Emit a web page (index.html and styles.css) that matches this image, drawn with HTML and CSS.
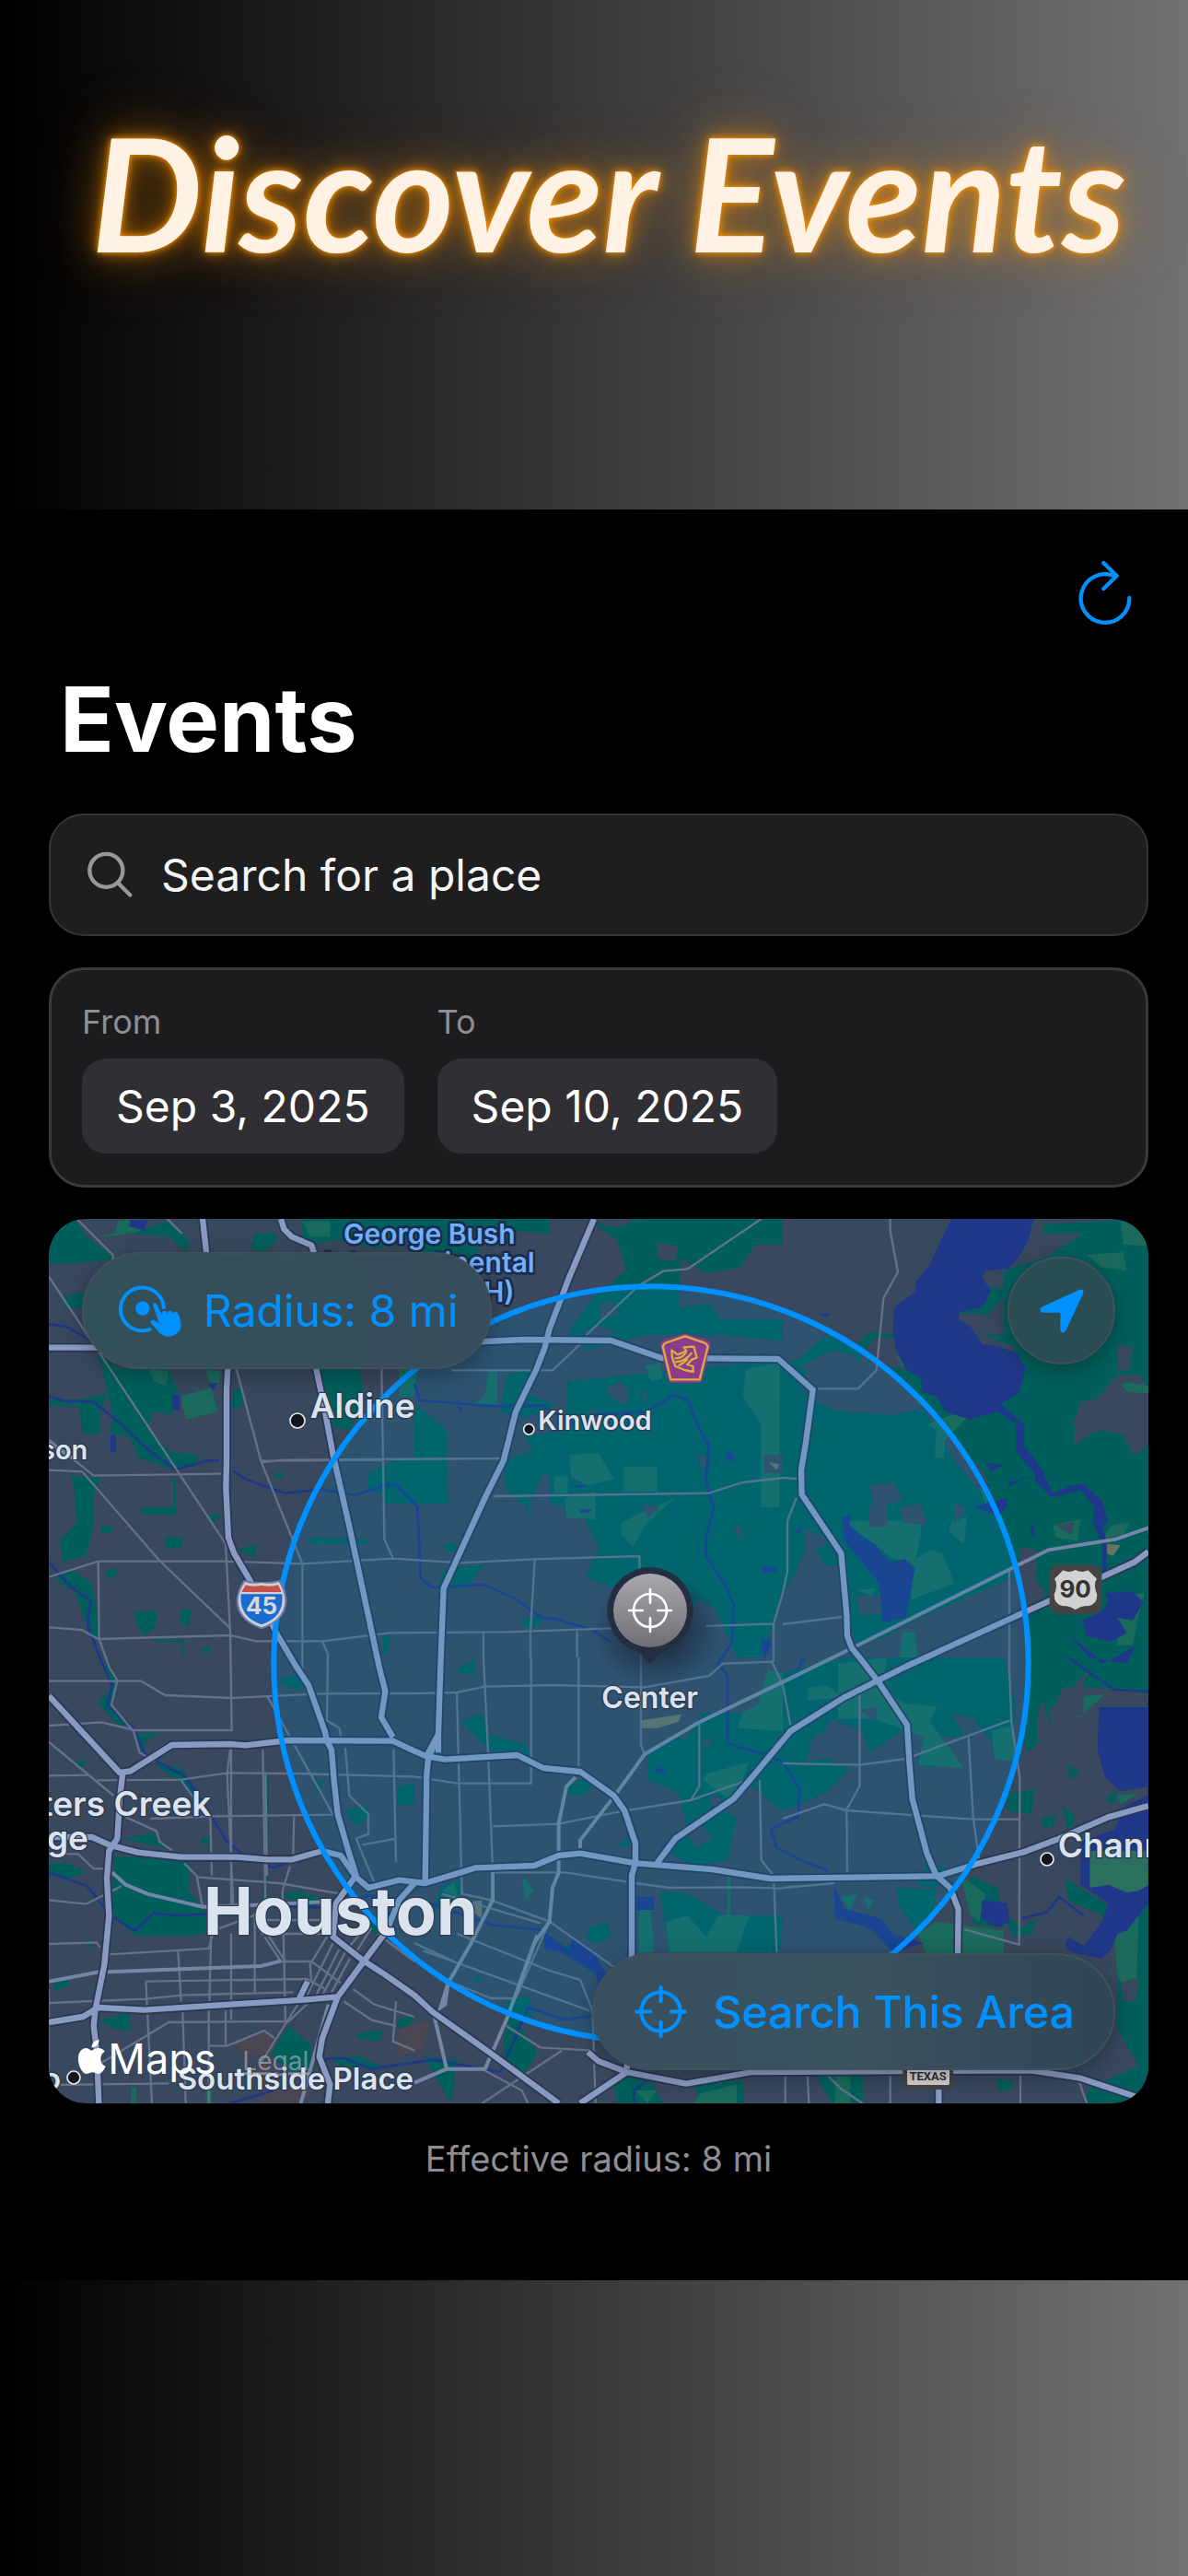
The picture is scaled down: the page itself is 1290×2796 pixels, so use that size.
FILE: index.html
```html
<!DOCTYPE html>
<html lang="en">

<head>
    <meta charset="UTF-8">
    <meta name="viewport" content="width=device-width, initial-scale=1.0">
    <title>Discover Events</title>
    <link rel="stylesheet" href="styles.css">
</head>

<body>

    <header class="hero">
        <h1 class="heroTitle">Discover Events</h1>
    </header>

    <main class="panel">
        <div class="toolbar">
            <button type="button" class="iconButton" aria-label="Refresh">
                <svg class="refreshIcon" viewBox="60 45 180 225">
                    <path d="M229 177A79 79 0 1 1 182 106M145 63L188 105L145 147" />
                </svg>
            </button>
        </div>

        <h2 class="title">Events</h2>

        <div class="cards">
            <label class="search">
                <svg class="searchIcon" viewBox="134 134 150 152">
                    <circle cx="195" cy="196" r="54" />
                    <path d="M234 237L273 276" />
                </svg>
                <input class="searchInput" type="text" placeholder="Search for a place" aria-label="Search for a place">
            </label>

            <div class="dates">
                <div class="field">
                    <label for="from">From</label>
                    <button type="button" id="from" class="dateButton">Sep 3, 2025</button>
                </div>
                <div class="field">
                    <label for="to">To</label>
                    <button type="button" id="to" class="dateButton">Sep 10, 2025</button>
                </div>
            </div>

            <div class="map">
                <svg class="mapArt" viewBox="9 12 3582 2880" preserveAspectRatio="xMidYMid slice">
                    <rect class="land" x="9" y="12" width="3582" height="2880" />

                    <!-- woods and parks -->
                    <g class="green">
                        <path d="M9 20L100 20L130 70L215 130L210 145L110 155L9 160ZM280 60L390 20L420 30L470 90L455 118L400 70ZM680 60L750 58L752 85L705 120L668 105ZM60 265L120 250L130 305L60 300Z" />
                        <path d="M170 450L240 500L400 505L430 570L410 650L350 640L330 690L400 770L495 780L490 815L420 830L375 815L300 790L270 720L205 710L220 660Z" />
                        <path d="M10 600L110 600L200 580L175 640V712H120L108 640L115 622H10ZM610 570L640 560V620L605 635ZM745 840H772V855H745ZM180 1012H212V1034H180ZM388 1048H443V1084H388ZM625 1090L683 1070V1115ZM195 1155L235 1150L225 1180H195ZM500 1420L535 1400V1425Z" />
                        <path d="M80 850L180 855L155 905V1015L130 1110L55 1130L45 1060L100 1000L92 890ZM312 950H415V855H423V975H312ZM480 960L520 930ZM520 980L572 970L545 1000ZM288 1290L362 1288L355 1340L320 1370L295 1330ZM440 1285L473 1282L465 1340L436 1325ZM350 1380L450 1383V1435H442V1390H350Z" />
                        <path d="M30 1180L80 1150L150 1200L165 1290L185 1390L150 1370L120 1300L90 1220L60 1210ZM190 1440L225 1500L230 1560L210 1590L260 1660L240 1665L170 1590L210 1540ZM295 1690L370 1682L320 1715L330 1760ZM350 1785L440 1800L495 1880L540 1960L500 1905L430 1840ZM90 1776L135 1775L115 1800Z" />
                        <path d="M220 2087L440 2098L465 2110V2200L520 2270L515 2340L405 2345L290 2345L215 2285ZM400 2300L520 2280V2330L480 2345L400 2345ZM9 2110L70 2110L130 2140L80 2160L9 2150ZM250 2030L350 2010L390 2060L320 2045ZM120 2345L160 2395L140 2380ZM20 2500L70 2490V2510L30 2525Z" />
                        <path d="M735 2720L790 2640L860 2700L870 2780L800 2790L735 2740ZM170 2620L273 2600V2892H275V2655L225 2650ZM720 1820H726V2170H720ZM1010 2665L1100 2650L1085 2690L1015 2680ZM1145 2620L1200 2600L1185 2640L1150 2650ZM505 2025H540V2047H505ZM760 2210L830 2200L905 2230L860 2260ZM700 2220L730 2215L750 2265Z" />
                        <path d="M835 12H1110L1290 12L1640 12L1640 60L1430 45L1400 140L1230 130L1200 60L1080 110L940 80L835 100ZM900 500H1020L1040 600L990 700L930 690L890 610ZM1050 840L1130 800L1200 790V940H1107L1090 900H1050ZM1200 612L1305 700L1310 940H1200ZM845 1050L1050 1055L1040 1070L870 1070ZM1095 1370H1120L1110 1430H1095Z" />
                        <path d="M1780 25L1860 40L1930 12H2350L2400 12V95L2310 95L2260 170L2150 190L2070 140L2060 300L2160 290L2200 340H2400V410L2200 390L1950 390L1760 440L1700 380L1790 260L1890 180L1860 80Z" />
                        <path d="M1700 540L2400 470L2490 600L2600 640L2760 650L2860 630L2960 800L3100 960L3150 1180L2850 1310L2640 1400L2600 1240L2490 1060L2400 1240L2330 1440L2250 1440L2180 1280L2120 1250L2060 1390L1940 1250L1760 1180L1800 1080L1740 960L1640 940L1640 860L1560 720L1690 700Z" />
                        <path d="M1490 800L1600 760L1640 800L1560 970H1590L1500 900ZM1290 1155L1430 1135L1370 1210L1280 1225ZM1500 520L1580 500L1570 580L1660 620L1560 660L1480 640ZM1290 1070L1335 1065L1340 1095H1310ZM1545 1320L1620 1300L1600 1340L1560 1345Z" />
                        <path d="M2870 340L3000 200L3100 240L3160 215L3070 325L2860 310ZM3250 30L3591 12V560L3560 520L3491 520L3400 620L3350 700L3350 750L3420 700L3500 700L3540 780L3591 750V1080L3460 1140L3260 1230L3130 1080L3060 850L2960 720L2860 620L2750 490L3100 590L3160 430L3050 390H3120V180L3250 140L3380 60H3250Z" />
                        <path d="M3190 1300L3260 1230L3460 1140L3591 1080V1450H3195ZM2860 1060L3120 1060L3160 1150L2920 1260Z" />
                        <path d="M2880 280L2960 380L3050 390L2700 400L2580 560L2600 450L2500 500L2420 570L2400 480L2450 470L2540 390L2640 420L2680 380L2800 390Z" />
                        <path d="M2460 770L2560 700L2700 760L2800 940L2840 1000L2840 1080L2790 1090L2780 1140L2860 1160L2920 1260L2860 1300L2720 1380L2620 1360L2600 1220L2490 1060Z" />
                        <path d="M3200 1440H3591V1560L3470 1540L3310 1540L3250 1700L3200 1750L3180 1700L3190 1480ZM2610 1440L3120 1440L3160 1600L3140 1740L3100 1740L3020 1640L2950 1620L2990 1700H2900V1800L2840 1790L2860 1700L2790 1680L2680 1750L2660 1680L2560 1640L2470 1780L2540 1770L2620 1800L2540 1880L2400 1940L2300 1860L2210 1910L2080 1810L2180 1700L2060 1740L2140 1620L2320 1620L2360 1500Z" />
                        <path d="M1960 1745L2060 1700L2140 1720L2180 1860L2160 1920L2250 1960L2220 2100L2100 2120L2010 2060L2090 2000L2060 1880L1960 1840ZM2000 2200L2090 2210L2210 2280L2400 2280L2390 2400L2030 2400ZM2870 2110L2960 2130L2900 2190L2840 2180ZM2770 2190L2900 2195L2890 2290L2840 2340L2780 2250ZM3010 2150L3100 2190L3120 2320L3020 2310ZM3120 2280L3180 2320L3230 2290L3210 2340L3150 2350Z" />
                        <path d="M3130 1880L3220 1870L3210 1950L3130 1940ZM3245 1960L3290 1955L3280 1990L3250 1995ZM3330 1790L3370 1815L3335 1840ZM3310 1920L3355 1960L3330 2010ZM3450 1900L3490 1870L3480 1920ZM3320 2160L3480 2260L3591 2200V2892H3380L3400 2840L3560 2770L3490 2650V2400L3550 2300L3440 2280L3330 2230Z" />
                        <path d="M1350 1470L1395 1450V1500L1340 1490ZM1350 1650L1420 1620L1440 1690L1560 1720L1580 1760L1450 1745ZM1700 1860L1760 1830L1790 1840L1750 1890L1700 1890ZM1860 2050L1910 2020L1900 2060ZM1770 2320L1830 2300L1840 2350L1800 2370L1760 2360ZM1640 2350L1790 2430L1820 2500L1760 2450L1660 2390ZM970 1940L1050 1920L1050 1960L1010 1990ZM870 1840L905 1845L885 1885ZM1145 1860L1200 1850V1920H1145ZM760 1510L840 1490L830 1550L770 1530Z" />
                        <path d="M1500 2560L1570 2540L1590 2600L1540 2630L1600 2730L1560 2790L1490 2760ZM1850 2810L1950 2790L2010 2892H1860ZM1390 2480L1425 2480L1400 2505ZM2110 2820H2270V2892H2130ZM2500 2790L2660 2780V2892H2560ZM3100 2810L3150 2820L3140 2850H3100ZM1230 2740L1340 2750L1320 2892ZM920 2740L1020 2740L1120 2780L960 2770ZM1290 2180L1350 2170L1340 2250L1260 2260ZM1030 2310L1100 2300L1090 2350Z" />
                    </g>
                    <g class="lightGreen">
                        <path d="M235 20L270 15L310 50L220 68H170L225 58ZM835 20H925V70H860ZM335 500L400 508L390 555L350 540ZM440 590L560 555L570 510L520 500L560 640L455 665ZM520 2840H540V2892H520ZM277 2840H295V2892H277ZM1150 500H1210L1200 590H1150Z" />
                        <path d="M1440 510H1470V615H1390L1430 590ZM1705 780L1800 775L1850 860L1760 880L1710 850ZM1655 850H1700V905H1655ZM1690 920L1790 900V990L1695 985ZM1880 820H1990V900H1880ZM1875 1000L1980 950L2050 920L1960 1000L1910 1080L1875 1040ZM2280 500L2390 480V950H2330V680L2270 590ZM2030 430L2060 420L2050 500ZM1950 490L2000 480L2010 530L1970 540Z" />
                        <path d="M3500 20H3591V100L3510 95ZM3390 130L3510 120L3520 180L3440 170ZM3501 550L3530 545L3591 555V580L3520 575ZM2770 455L2800 470L2790 500ZM2870 680L2980 640L3010 650L2930 730L2925 790H2895L2900 700ZM2600 995H2850V1040L2830 1130L2760 1120ZM2800 1140L2880 1090L2920 1100L2960 1200L2820 1250ZM2950 1000L3000 980L2990 1070L2940 1030ZM3040 890L3080 920L3060 940ZM3280 1010L3370 990L3360 1060L3290 1050ZM3470 1010L3530 1000L3510 1040L3440 1055ZM2640 1220L2700 1215L2690 1240ZM2790 1355L2830 1360L2840 1440H2780Z" />
                        <path d="M2580 1460L2740 1440L2720 1540L2800 1590L2900 1600L2880 1650L2990 1800L2840 1790L2860 1700L2780 1670L2700 1640L2580 1640ZM3080 1680L3150 1660L3170 1780L3090 1770ZM2480 1540L2540 1530L2600 1570L2480 1580ZM2350 1480L2400 1490V1680L2250 1670L2270 1620L2320 1590ZM2150 1820L2290 1780L2270 1840L2220 1900L2140 1840ZM1930 2260H1970L1980 2400H1930ZM2020 2300L2090 2280L2150 2350L2190 2280H2290L2250 2400H2030ZM2220 2140H2230V2290H2220Z" />
                        <path d="M2840 2340L2900 2300L3120 2330V2410H2870ZM2980 2150L3060 2210L3040 2300L3010 2280ZM3325 1570L3450 1560L3360 1640ZM2590 2220L2640 2210L2620 2270ZM2660 2220L2700 2230L2680 2260ZM3490 1890L3560 1880L3500 1920ZM3480 2340L3560 2280L3550 2560L3490 2480ZM2130 2860L2250 2830V2892H2110ZM2570 2800H2620V2892H2570ZM1550 2150L1590 2200L1560 2230ZM1290 2200L1330 2170L1340 2220ZM1920 2850L1990 2850L1960 2892ZM3490 1240L3580 1230L3560 1300L3540 1400L3490 1400Z" />
                    </g>
                    <g class="land">
                        <path d="M1800 290L1840 280L1870 320L1810 340ZM1990 90L2060 100L2050 150L1990 140ZM1740 380L1800 360L1860 380L1800 400ZM1820 570L1870 540L1900 570L1890 620L1850 600ZM1940 580L1960 570L1950 620ZM1760 640L1800 630L1790 660ZM2120 780L2160 790L2140 840ZM1940 940L2000 950L1960 990ZM2460 490L2560 440L2640 460L2620 550H2500ZM2520 590L2750 580L2700 635H2560ZM2680 880L2760 870L2790 930L2700 950ZM2680 945H2740V1015H2680ZM2780 950L2850 940L2870 1010L2790 1000ZM2960 940L3000 950L2960 1010ZM2340 780H2400V840H2340Z" />
                        <path d="M3170 1080L3230 1090L3220 1220L3180 1210ZM3290 1010L3350 1000L3340 1040ZM3400 1480L3250 1630H3380V1520ZM3230 1620L3250 1580L3280 1710H3230ZM3370 610L3450 590L3530 600L3591 590V740L3560 780L3540 720L3440 700L3370 720L3345 680ZM3490 420L3540 430L3530 500L3490 510ZM2080 2010L2140 1990L2170 2030L2120 2060ZM2510 1690L2590 1680L2540 1740H2480ZM2650 1610L2710 1600L2700 1650ZM3500 2500L3560 2480L3550 2560H3510ZM2240 1020L2270 1010L2260 1060ZM2640 1240H2720V1300H2650ZM2470 1140H2590V1210H2470ZM2470 1020L2540 1050V1080H2470Z" />
                    </g>
                    <g class="rose">
                        <path d="M600 2700L710 2655L760 2680L740 2720L680 2740ZM690 2740L740 2760L730 2850L690 2800ZM720 2850L880 2840L830 2892H700ZM1150 2650L1250 2620L1230 2720L1140 2740Z" />
                    </g>
                    <g class="sand">
                        <path d="M1940 1645L2070 1625L2060 1650L1990 1670L1940 1670ZM1350 2240L1420 2230L1420 2290ZM3455 1070L3500 1075L3475 1110L3455 1100ZM2355 805L2390 810L2380 830Z" />
                    </g>

                    <!-- lakes and bayous -->
                    <g class="water">
                        <path d="M2950 12H3217L3200 80L3170 135L3135 175L3060 180L3050 205L3078 245L3050 300L2975 315L2972 340L3010 360L3050 420L3110 430L3165 450L3190 500L3170 580L3110 615L3150 650L3185 680V750L3240 820L3280 905L3340 880L3380 875L3440 930L3460 1000L3440 1010L3455 1060V1180H3440V1070L3410 1000L3415 950L3370 895L3280 920L3225 870L3220 840L3160 770V680L3100 640L3010 665L2930 640L2900 590L2855 575L2850 530L2800 500L2770 440L2758 370L2765 300L2830 250L2835 215L2880 160L2920 70Z" />
                        <path d="M2593 985L2625 975L2615 1010L2660 1050L2700 1070L2730 1110L2755 1130L2800 1120L2830 1150L2820 1210L2800 1310L2725 1325L2715 1200L2650 1120L2600 1060ZM3058 805L3118 815L3080 835ZM3135 870L3195 855L3135 885ZM3025 950L3130 920V950L3100 980L3060 965ZM3208 1012H3218V1040H3208ZM2438 1030L2460 1012V1040ZM2512 320L2558 320L2540 332Z" />
                        <path d="M3450 1230L3540 1225L3575 1260L3540 1320L3490 1310L3520 1360L3470 1390L3390 1370L3375 1320L3440 1290L3460 1260ZM3335 1370L3400 1420L3440 1460L3520 1420L3550 1400L3520 1460L3400 1440ZM3430 1602H3591V1860L3500 1876L3450 1830L3425 1740ZM3520 1920L3591 1890V2240L3520 2330L3490 2340L3470 2390L3440 2420L3340 2400L3320 2380L3330 2350L3380 2380L3440 2300L3460 2240L3370 2180L3370 2040L3480 2000Z" />
                        <path d="M3050 2230L3130 2240L3140 2300L3100 2320L3045 2290ZM2568 2180L2600 2260L2720 2290L2760 2340L2860 2370L2760 2400L2680 2320L2570 2290ZM1620 2330L1700 2390L1720 2350L1790 2410L1840 2500L1850 2600L1815 2570L1790 2470L1680 2400L1625 2390ZM1922 2220H1980V2262H1922ZM1980 1815L2003 1795L2020 1818ZM2460 1440H2475L2440 1500ZM2330 1380H2360V1400L2340 1450ZM2330 1140L2380 1150V1162H2335ZM2215 770L2240 780V800L2215 795Z" />
                        <path d="M275 15H330L320 50L270 35ZM411 585H436V635H411ZM210 715H228V770H210ZM525 550L560 545L545 570ZM1335 620L1355 625L1358 650ZM1720 880L1762 878L1755 888L1725 885ZM1740 960L1780 955L1770 968H1740Z" />
                    </g>
                    <g class="park">
                        <path d="M3400 2070L3590 2070L3591 2180L3560 2200L3520 2205L3460 2180L3400 2190Z" />
                    </g>
                    <g class="bayou">
                        <path d="M9 355L65 362L150 410M9 590L65 606H152L245 680L340 770L420 828L530 798L565 800M610 832L650 860L780 905L900 893L1005 912L1110 878L1140 880L1210 950L1220 1180L1255 1212L1430 1203L1530 1250L1615 1310L1660 1315L1780 1350L1840 1390M9 1130L80 1210L145 1255L135 1335L185 1465L215 1530L200 1595L285 1670L325 1760L450 1825L490 1880L590 2040L640 2080L740 2125L800 2105" />
                        <path d="M1200 550L1218 603L1460 622L1615 620L1720 680L1790 650L1955 640L2045 585L2090 600L2130 700L2160 750L2148 865L2175 950L2150 1050V1110L2210 1200L2240 1270L2235 1390L2190 1460L2220 1500V1720L2320 1750L2400 1780L2455 1870L2450 1960L2400 1980L2362 2000L2380 2060L2480 2110L2540 2130L2570 2180" />
                        <path d="M9 2140L135 2185L210 2280L290 2330L350 2272L430 2280L530 2275L640 2245L920 2255L1050 2215L1250 2240L1450 2310L1630 2330M860 2750L970 2745L1060 2780L1260 2750L1480 2790L1570 2580L1690 2620L1820 2600M600 2892L740 2850M3330 1440L3480 1545L3591 1550M3180 2290L3260 2270L3300 2220L3380 2280M1915 2892V2850L1990 2790" />
                    </g>

                    <!-- streets -->
                    <g class="street">
                        <path d="M100 12L218 130V150M9 200L175 450L585 1070M395 12L443 60M9 730L155 848L570 842M9 830L118 835L370 1125L600 1345M620 500L700 800L835 1135V1485M700 800L1100 797M700 805L770 797L1490 792M1093 500L1102 1055L1130 1117M9 1178L170 1127H585L835 1135L1130 1118L1350 1132L1590 1120L1933 1110V1150M585 1070L600 1360L605 1680M170 1127L173 1380L205 1470L232 1515L213 1595L285 1680L305 1750L355 1780M9 1342L115 1350L170 1380L600 1368L685 1387H900L1120 1360L1500 1357L1850 1345M900 1387L918 1430L915 1645L955 1670L965 1720" />
                        <path d="M9 1517H310L388 1563L605 1572L900 1558L1200 1557L1338 1554L1430 1535L1650 1530L1950 1537L2160 1500L2205 1460L2365 1454L2400 1530M9 1662L180 1651L290 1677H605M9 1715L220 1890M9 1825L135 1823M165 1840L440 1838L590 1816L810 1818L1200 1828L1340 1850H1580V1440M600 1740L590 1820L610 2250M603 1740V2250M706 1740L715 2250M340 1965L555 1957L935 1952L720 1565M260 1960L360 2005L370 2040L410 2068M535 1960L540 2150M808 1955L805 2080M715 1820L720 2150M975 1735L988 1890L1050 1950V2015L1010 2030L1070 2175M1132 1740L1140 2105M1030 2050L1140 2030M9 2080H105L155 2128H200" />
                        <path d="M440 1840L490 1910M450 2110L490 2150L510 2250M490 2155L760 2175L960 2210M9 2230L130 2243L245 2185M795 2120L770 2200L780 2630M540 2250L530 2640M9 2373L165 2368L175 2385M205 2407L530 2388L545 2330L690 2275M325 2495L850 2487L910 2520M430 2395L440 2560M325 2495L345 2892M9 2565L325 2552L440 2540L805 2530M603 2340V2620M680 2270V2530M700 2340H900M712 2350L765 2430M720 2340L780 2430M690 2295H900M9 2520V2892M180 2760L400 2628L790 2625L870 2550M530 2705H590L710 2655L745 2680M445 2595L455 2892M530 2590V2892M585 2590V2705M9 2832L400 2827" />
                        <path d="M1338 1554L1355 2210L1450 2230L1640 2300L1860 2455M1425 1440L1440 1750L1455 2130M1580 1440M1735 1440V1795M1455 1990L1670 1982L1880 1940L2100 1905L2270 1845M1300 1440M1425 1360V1440M1592 1118L1578 1360V1440M1730 1355V1440M1938 1380V1725L1950 1755M2128 1660V1860L2100 1905M2325 1840L2330 2100L2370 2150L2380 2400M1920 2175L2030 2190L2260 2188L2400 2192M1290 2210L1610 2305M1340 2340L1640 2460L1740 2490L1780 2590L1790 2892M1230 2395L1770 2590M1300 2490L1450 2550H1520M1640 2300L1530 2550M1200 2370L1330 2430M1500 2640L1610 2710L1780 2720M1680 2720L1420 2892M1420 2780L1550 2850L1570 2892M1455 2140L1690 2140L1890 2170" />
                        <path d="M2750 12V50L2775 185L2728 270L2705 505L2645 565H2515M2330 12L2090 175L2010 182L1930 230L1760 390M1740 420L1650 505H1320M1460 915L2160 905L2270 870L2400 855L2445 858M2445 920L2415 995V1160L2400 1230L2370 1330L2150 1338M2370 1330V1455M2400 1332L2600 1307M3138 1155V1480L3145 1650L3172 1830L3170 2375L2990 2325M2400 1785L2650 1790L2800 1770L3140 1645M3005 1700L3020 1960L3040 2100M2650 1560V1860L2608 1935L2610 2140M2400 1965L2535 1918L2608 1938L2840 1955L3020 1967H3170M2400 2190L2570 2175M2400 1530L2425 1660M2530 2785L2590 2845L2660 2892M2408 2790V2892M2480 2790L2485 2892M2750 2790V2892M3174 2790V2892M3365 2820L3390 2892" />
                        <path d="M915 2350L860 2440L865 2500M935 2370L850 2540M955 2390L880 2540M975 2400L900 2540M990 2420L930 2530M1060 2320L1010 2400M1050 2310L980 2390M765 2430H865L960 2500M1000 2520L1070 2570L1200 2610M1080 2340L1200 2430M970 2560L1060 2620L1140 2640M1140 2560L1130 2690L1200 2720M820 2570L700 2760M920 2570L880 2720" />
                    </g>
                    <g class="avenue">
                        <path d="M215 2140L260 2180L330 2210L510 2252L720 2245L920 2235M9 2495L165 2465L700 2445L765 2428M1265 2610L1305 2780H1430L1500 2620L1590 2370L1640 2300L1650 2190L1670 2140V1980L1695 1860L1725 1830M1200 2825L1305 2780M1455 2140V2230L1385 2370L1310 2500L1285 2580L1300 2570L1310 2500M1600 2345L1530 2540M830 2892L920 2570" />
                        <path d="M3591 1018L3485 1055L3265 1090L3135 1155L2645 1400L2400 1520L2120 1655L1950 1755L1860 1880L1740 2035V2060M9 740L100 800" />
                    </g>

                    <!-- freeways, each drawn as a dark edge under the road -->
                    <g class="edge">
                        <use href="#freeways" />
                    </g>
                    <g class="road">
                        <g id="freeways">
                            <path d="M510 12L522 120L592 500L588 570V800L586 890L594 1050L612 1100L665 1190L750 1360L815 1470L855 1530L908 1680L915 1712L930 1740L938 1840L950 1950L985 2070L1010 2150L945 2240L935 2350L1030 2425L1100 2470L1200 2540L1260 2595L1450 2730L1670 2892" />
                            <path d="M765 12L775 45L800 70L865 98L872 120L880 500L905 620L935 780L985 1000L1085 1470L1105 1550L1092 1635L1130 1700" />
                            <path d="M1785 12L1705 200L1640 370L1625 430L1598 500L1530 640L1490 800L1430 920L1295 1215L1285 1470L1278 1690L1245 1770L1240 1820L1235 2175M1278 1750V1690L1240 1760" />
                            <path d="M9 431H170L1430 411L1560 405L1840 408L2005 465L2385 468L2498 568L2475 740L2460 830L2462 910L2590 1100L2608 1300L2610 1370L2625 1410L2650 1440L2712 1520L2805 1660L2812 1780L2822 1900L2870 2080L2900 2150L2945 2190L2972 2260L2970 2410" />
                            <path d="M3591 1095L3545 1130L3440 1178L3150 1310L2800 1470L2600 1570L2425 1680L2400 1710L2300 1830L2240 1900L2050 2030L1990 2110" />
                            <path d="M9 1565L240 1815L275 1810L410 1725L600 1722L650 1726L790 1710L1130 1712L1200 1745L1240 1762L1300 1772L1535 1758L1620 1800L1740 1812L1850 1890L1885 1940L1920 2045V2110L1908 2150V2430L1892 2780" />
                            <path d="M250 1815L240 1900L232 2030L205 2070L198 2160L205 2280L190 2440L160 2590L155 2640L165 2720L172 2892" />
                            <path d="M9 2025H150L205 2050L300 2075L440 2090H620L720 2098H800L900 2070L960 2085L1010 2155L1050 2190L1150 2165L1235 2175L1400 2125L1590 2118L1670 2085L1740 2078L1920 2110L2170 2130L2360 2160L2905 2152L3040 2110L3180 2075L3300 2030L3460 1960L3591 1923" />
                            <path d="M9 2628L120 2610L170 2580L320 2588L600 2570L840 2555L950 2545L1035 2430L1110 2330L1150 2230L1200 2175M950 2545L900 2680L890 2740L925 2830L918 2892M825 2550L852 2495" />
                            <path d="M1765 2725L1800 2755L1892 2790L2085 2828L2300 2790L3210 2785L3370 2810L3550 2870L3591 2885M1892 2790L1740 2892M2908 2892V2780" />
                        </g>
                    </g>

                    <!-- search radius -->
                    <circle class="radius" cx="1971" cy="1461" r="1229" />

                    <!-- place names -->
                    <g class="label">
                        <g class="airport">
                            <text x="1249" y="93">George Bush</text>
                            <text x="1249" y="187">Intercontinental</text>
                            <text x="1249" y="281">Airport (IAH)</text>
                        </g>
                        <text class="town" x="860" y="660">Aldine</text>
                        <text class="small" x="1603" y="698">Kinwood</text>
                        <text class="small endText" x="136" y="795">son</text>
                        <text class="town endText" x="538" y="1956">ters Creek</text>
                        <text class="town endText" x="138" y="2066">ge</text>
                        <text class="city" x="513" y="2343">Houston</text>
                        <text class="town" x="3296" y="2090">Chann</text>
                        <text class="place" x="428" y="2848">Southside Place</text>
                        <text class="place endText" x="48" y="2848">o</text>
                        <text class="center" x="1967" y="1605">Center</text>
                    </g>
                    <g class="dot">
                        <circle cx="819" cy="669" r="24" />
                        <circle cx="1573" cy="697" r="17" />
                        <circle cx="3261" cy="2097" r="21" />
                        <circle cx="90" cy="2808" r="21" />
                    </g>

                    <!-- route shields -->
                    <g>
                        <path fill="#6b7cab" d="M645 1188Q702 1202 762 1188Q786 1220 784 1262Q780 1320 702 1348Q625 1320 620 1262Q620 1220 645 1188Z" />
                        <path fill="#d0d0d4" d="M648 1194Q675 1204 702 1196Q730 1204 758 1194Q778 1225 778 1258Q774 1318 702 1342Q631 1318 626 1258Q626 1225 648 1194Z" />
                        <path fill="#c94f49" d="M650 1204Q676 1212 702 1205Q729 1212 756 1204L767 1227H637Z" />
                        <path fill="#1b6bd0" d="M635 1234H769Q778 1308 702 1333Q627 1308 635 1234Z" />
                        <text class="shieldText white" x="702" y="1300">45</text>

                        <rect fill="#444" x="3269" y="1138" width="170" height="161" rx="30" />
                        <path fill="#d2d2d2" d="M3313 1156Q3332 1166 3353 1155Q3375 1166 3394 1156L3423 1184Q3410 1200 3424 1236Q3424 1268 3395 1272Q3370 1272 3353 1285Q3337 1272 3312 1272Q3284 1268 3284 1236Q3298 1200 3285 1184Z" />
                        <text class="shieldText dark" x="3353" y="1245">90</text>

                        <path fill="#8f3b8c" d="M2082 384L2156 408Q2166 412 2164 424L2138 536Q2135 546 2124 546H2040Q2030 546 2027 536L2001 424Q1999 412 2010 408Z" />
                        <path fill="none" stroke="#d8ae3c" stroke-width="7" stroke-linejoin="round" d="M2082 394L2148 417L2156 427L2129 535H2035L2009 427L2016 417Z" />
                        <path fill="#8f3b8c" stroke="#d8ae3c" stroke-width="7" stroke-linejoin="round" d="M2078 430L2110 428L2120 464L2104 470L2088 486L2108 492V510L2080 504L2050 492L2040 464L2038 440L2058 454L2086 442Z" />
                        <path fill="none" stroke="#d8ae3c" stroke-width="7" d="M2050 478Q2080 478 2104 448M2060 490Q2078 482 2090 468M2048 466Q2070 468 2086 446" />

                        <rect fill="#444" x="2791" y="2760" width="164" height="87" rx="18" />
                        <rect fill="#d2d2d2" x="2805" y="2760" width="138" height="72" rx="6" />
                        <text class="stateText" x="2873" y="2818">TEXAS</text>
                    </g>

                    <!-- pin -->
                    <defs>
                        <linearGradient id="pinFill" x1="0" y1="0" x2="0" y2="1">
                            <stop offset="0" stop-color="#a9a8ad" />
                            <stop offset="1" stop-color="#706e74" />
                        </linearGradient>
                        <radialGradient id="pinShade">
                            <stop offset="0.4" stop-color="#1b2333" stop-opacity="0.6" />
                            <stop offset="1" stop-color="#1b2333" stop-opacity="0" />
                        </radialGradient>
                    </defs>
                    <ellipse cx="1990" cy="1350" rx="210" ry="190" fill="url(#pinShade)" />
                    <path fill="#232e40" d="M1968 1146A141 141 0 0 1 2019 1418Q1994 1428 1980 1448L1971 1458Q1967 1461 1963 1458L1954 1448Q1942 1428 1917 1418A141 141 0 0 1 1968 1146Z" />
                    <circle cx="1968" cy="1287" r="120" fill="url(#pinFill)" />
                    <path class="pinMark" d="M1914 1287a54 54 0 1 0 108 0a54 54 0 1 0 -108 0M1968 1218V1262M1968 1312V1356M1899 1287H1943M1993 1287H2037" />

                    <!-- map credit -->
                    <path fill="#fff" d="M149 2711Q147 2690 173 2684Q173 2706 149 2711ZM148 2720Q160 2712 170 2712Q184 2712 191 2723Q178 2731 178 2747Q178 2764 194 2771Q183 2797 169 2796Q158 2790 148 2791Q138 2796 130 2796Q118 2794 108 2768Q99 2736 113 2720Q123 2710 135 2713Z" />
                    <text class="credit" x="202" y="2795">Maps</text>
                    <a href="#legal"><text class="legal" x="640" y="2785">Legal</text></a>
                </svg>

                <div class="mapControls">
                    <div class="mapRow">
                        <button type="button" class="pill radiusButton">
                            <svg class="tapIcon" viewBox="236 218 203 170">
                                <path class="ring" d="M382 298A70 70 0 1 0 341 362" />
                                <circle cx="313" cy="296" r="23" />
                                <path d="M346 284Q350 274 359 281L377 320Q373 306 382 304Q390 304 394 314Q393 304 401 303Q410 304 413 314Q414 305 421 306Q428 308 431 319Q440 344 437 360Q428 386 396 387Q377 386 366 374L339 342Q338 332 348 333L367 344Z" />
                            </svg>
                            Radius: 8 mi
                        </button>
                        <button type="button" class="pill locateButton" aria-label="Current location">
                            <svg class="arrowIcon" viewBox="824 241 144 144">
                                <path d="M830 300L954 243Q969 240 966 255L909 377Q903 386 896 382Q891 380 891 374V318H834Q826 317 825 309Q825 303 830 300Z" />
                            </svg>
                        </button>
                    </div>
                    <div class="mapRow">
                        <button type="button" class="pill searchArea">
                            <svg class="scopeIcon" viewBox="744 1070 172 172">
                                <circle cx="830" cy="1156" r="64" />
                                <path d="M830 1076V1122M830 1190V1236M750 1156H796M864 1156H910" />
                            </svg>
                            Search This Area
                        </button>
                    </div>
                </div>
            </div>
        </div>

        <p class="caption">Effective radius: 8 mi</p>
    </main>

</body>

</html>
```

FILE: styles.css
```css
* {
    box-sizing: border-box;
}

body {
    margin: 0;
    min-height: 100vh;
    background: linear-gradient(90deg, #000, #727272);
    color: #fff;
    font-family: Inter, 'Liberation Sans', sans-serif;
}

button,
input {
    margin: 0;
    padding: 0;
    border: 0;
    background: none;
    color: inherit;
    font: inherit;
}

button {
    cursor: pointer;
}

svg {
    display: block;
    flex: none;
}

.hero {
    height: 553px;
    padding-top: 108px;
}

.heroTitle {
    margin: 0;
    padding-left: 32px;
    color: #fff2e5;
    font-family: Lato, sans-serif;
    font-size: 170px;
    font-style: italic;
    font-weight: 700;
    line-height: 200px;
    text-align: center;
    white-space: nowrap;
    text-shadow: 0 0 6px #ff9500, 0 0 18px rgba(255, 149, 0, 0.6), 0 0 45px rgba(255, 149, 0, 0.5), 0 0 100px rgba(255, 149, 0, 0.2);
}

.panel {
    padding: 52px 43px 106px 53px;
    background: #000;
}

.toolbar {
    display: flex;
    justify-content: flex-end;
    padding-right: 17px;
}

.refreshIcon {
    width: 60px;
    height: 75px;
    fill: none;
    stroke: #0091ff;
    stroke-width: 13;
    stroke-linecap: round;
    stroke-linejoin: round;
}

.title {
    margin: 41px 0 42px;
    padding-left: 12px;
    font-size: 97px;
    font-weight: 700;
    line-height: 120px;
}

.cards {
    display: flex;
    flex-direction: column;
    gap: 34px;
}

.search {
    display: flex;
    align-items: center;
    gap: 30px;
    height: 133px;
    padding: 0 40px;
    border: 2px solid #363638;
    border-radius: 38px;
    background: #1e1e1e;
}

.searchIcon {
    width: 50px;
    height: 51px;
    fill: none;
    stroke: #98989a;
    stroke-width: 13;
    stroke-linecap: round;
}

.searchInput {
    flex: 1;
    min-width: 0;
    outline: none;
    font-size: 48px;
}

.searchInput::placeholder {
    color: #f5f5f5;
    opacity: 1;
}

.dates {
    display: flex;
    gap: 36px;
    padding: 34px 33px;
    border: 3px solid #3a3a3c;
    border-radius: 38px;
    background: #1c1c1e;
}

.field {
    display: flex;
    flex-direction: column;
    gap: 18px;
}

.field label {
    color: #8e8e93;
    font-size: 36px;
    line-height: 44px;
}

.dateButton {
    height: 103px;
    padding: 0 37px;
    border-radius: 26px;
    background: #303034;
    font-size: 48px;
}

.map {
    position: relative;
    overflow: hidden;
    border-radius: 40px;
}

.mapArt {
    width: 100%;
    height: 960px;
}

.land {
    fill: #38485e;
}

.green {
    fill: #005f5c;
}

.lightGreen {
    fill: #1a6b5c;
}

.park {
    fill: #2b705f;
}

.rose {
    fill: #4b4752;
}

.sand {
    fill: #6b7260;
}

.water {
    fill: #1f3788;
}

.bayou {
    fill: none;
    stroke: #1f3788;
    stroke-width: 8;
}

.street {
    fill: none;
    stroke: #65708a;
    stroke-width: 7;
}

.avenue {
    fill: none;
    stroke: #7585a3;
    stroke-width: 12;
}

.edge {
    fill: none;
    stroke: #2a3952;
    stroke-width: 30;
    stroke-linejoin: round;
}

.road {
    fill: none;
    stroke: #8a9bc3;
    stroke-width: 19;
    stroke-linejoin: round;
}

.radius {
    fill: rgba(0, 134, 200, 0.18);
    stroke: #0091ff;
    stroke-width: 18;
}

.label {
    fill: #dbe3ee;
    stroke: #2c3a50;
    stroke-width: 8;
    stroke-linejoin: round;
    paint-order: stroke;
    font-weight: 600;
}

.airport {
    fill: #6fb0ff;
    stroke: #1d2c4a;
    stroke-width: 16;
    font-size: 90px;
    text-anchor: middle;
}

.town {
    font-size: 111px;
}

.small {
    font-size: 87px;
}

.place {
    font-size: 99px;
}

.city {
    font-size: 216px;
    font-weight: 700;
}

.center {
    font-size: 96px;
    text-anchor: middle;
}

.endText {
    text-anchor: end;
}

.dot {
    fill: #14141c;
    stroke: #e4e8ee;
    stroke-width: 5;
}

.shieldText {
    font-size: 78px;
    font-weight: 700;
    text-anchor: middle;
}

.white {
    fill: #d8d8dc;
}

.dark {
    fill: #333;
}

.stateText {
    fill: #333;
    font-family: Roboto, sans-serif;
    font-size: 39px;
    font-weight: 700;
    text-anchor: middle;
}

.pinMark {
    fill: none;
    stroke: #fff;
    stroke-width: 8;
    stroke-linecap: round;
}

.credit {
    fill: #fff;
    font-size: 135px;
}

.legal {
    fill: #b4b9c2;
    fill-opacity: 0.6;
    font-size: 84px;
    text-decoration: underline;
}

.mapControls {
    position: absolute;
    inset: 0;
    display: flex;
    flex-direction: column;
    justify-content: space-between;
    padding: 36px;
}

.mapRow {
    display: flex;
    align-items: center;
    justify-content: space-between;
}

.pill {
    display: flex;
    align-items: center;
    height: 127px;
    border: 2px solid #42505a;
    border-radius: 64px;
    background: linear-gradient(90deg, #32505a, #374d5b);
    box-shadow: 0 6px 24px rgba(0, 0, 0, 0.3);
    color: #0091ff;
    font-size: 48px;
}

.pill svg {
    fill: #0091ff;
}

.radiusButton {
    gap: 24px;
    padding: 0 34px 0 38px;
}

.tapIcon {
    width: 68px;
    height: 57px;
}

.tapIcon .ring {
    fill: none;
    stroke: #0091ff;
    stroke-width: 12;
}

.locateButton {
    justify-content: center;
    width: 117px;
    height: 117px;
    background: #294d52;
}

.arrowIcon {
    width: 48px;
    height: 48px;
}

.searchArea {
    gap: 28px;
    margin-left: auto;
    padding: 0 42px 0 44px;
    background: linear-gradient(90deg, #384f5f, #3a535f 50%, #2f4654);
    font-weight: 500;
}

.searchArea .scopeIcon {
    width: 57px;
    height: 57px;
    fill: none;
    stroke: #0091ff;
    stroke-width: 12;
    stroke-linecap: round;
}

.caption {
    margin: 34px 0 0;
    color: #8e8e93;
    font-size: 38px;
    line-height: 52px;
    text-align: center;
}
```
